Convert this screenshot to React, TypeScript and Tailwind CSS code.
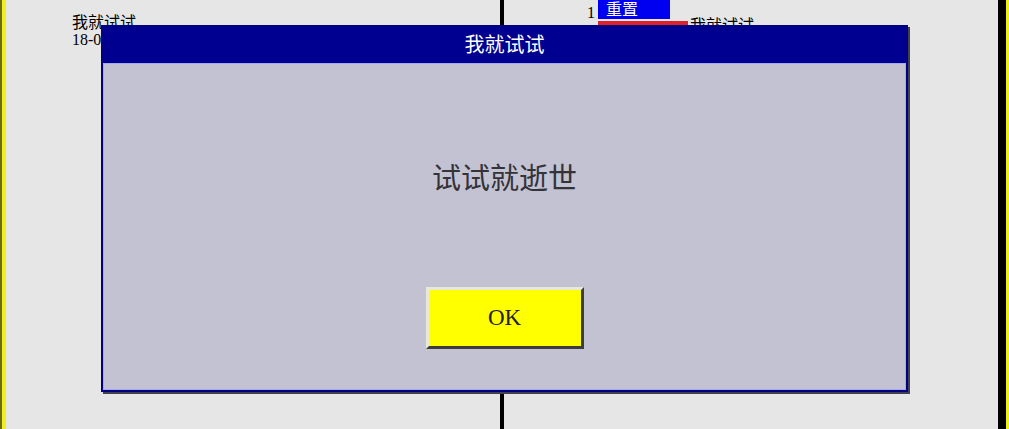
import React from 'react';

const song = "font-['Liberation_Serif','Noto_Sans_CJK_SC',serif]";

function LeftPanel() {
  return (
    <div className="w-[494px] shrink-0 pl-[66px] pt-[14px] text-[16px] leading-[17px] text-black">
      <div className={song}>我就试试</div>
      <div className={song}>18-05-21</div>
    </div>
  );
}

function RightPanel() {
  return (
    <div className="w-[494px] shrink-0 pl-[83px] text-[16px] leading-[17px] text-black">
      <div className="flex items-start">
        <span className={`${song} mt-[4px] w-[11px]`}>1</span>
        <span className={`${song} flex h-[19px] w-[72px] items-center bg-[#0000f0] pl-[8px] text-white`}>重置</span>
      </div>
      <div className="flex items-start">
        <span className="w-[11px]" />
        <span className="h-[5px] w-[90px] bg-[#e0202a]" />
        <span className={`${song} ml-[2px] -mt-[4px]`}>我就试试</span>
      </div>
    </div>
  );
}

function Dialog() {
  return (
    <div className="absolute left-[101px] top-[25px] flex h-[367px] w-[807px] flex-col border-2 border-[#000080] bg-[#c3c2d2] shadow-[2px_2px_0_#404050]">
      <div className={`${song} flex h-[36px] items-center justify-center bg-[#000090] text-[20px] text-white`}>
        我就试试
      </div>
      <div className="flex flex-1 flex-col items-center border border-[#a8a8f0]">
        <div className={`${song} mt-[98px] text-[29px] leading-[34px] text-[#333338]`}>试试就逝世</div>
        <button
          className={`${song} mt-[91px] h-[62px] w-[158px] border-[3px] border-t-[#e8e8d8] border-l-[#e8e8d8] border-r-[#3c3c3c] border-b-[#3c3c3c] bg-[#ffff00] text-[23px] text-[#222]`}
        >
          OK
        </button>
      </div>
    </div>
  );
}

export default function App() {
  return (
    <div className="relative flex h-[429px] w-[1009px] overflow-hidden bg-[#e6e6e6]">
      <div className="w-[2px] shrink-0 bg-[#6b6b10]" />
      <div className="w-[4px] shrink-0 bg-[#f0f020]" />
      <LeftPanel />
      <div className="w-[4px] shrink-0 bg-black" />
      <RightPanel />
      <div className="w-[8px] shrink-0 bg-black" />
      <div className="w-[3px] shrink-0 bg-[#f0f020]" />
      <Dialog />
    </div>
  );
}
